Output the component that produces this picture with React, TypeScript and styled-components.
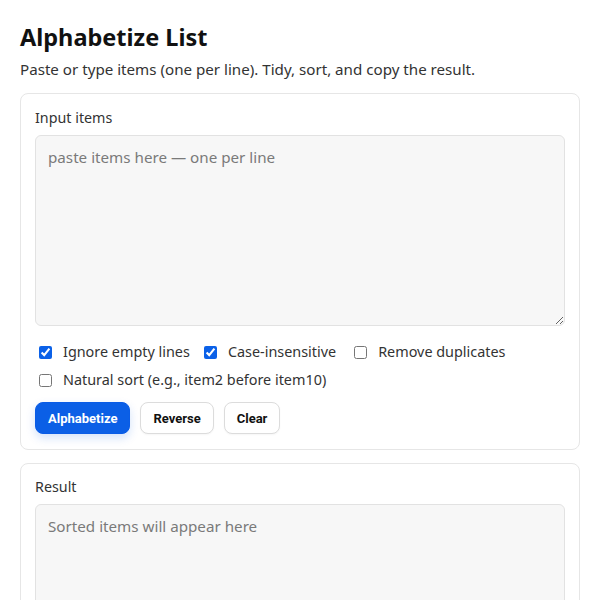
import React from "react";
import styled, { createGlobalStyle } from "styled-components";

const Global = createGlobalStyle`
  html, body { margin: 0; padding: 0; background: #ffffff; }
  body { font-family: "Noto Sans", "Open Sans", sans-serif; color: #1a1a1a; }
  * { box-sizing: border-box; }
`;

const Page = styled.main`
  padding: 20px 20px 20px 20px;
  display: flex;
  flex-direction: column;
`;

const Title = styled.h1`
  margin: 0;
  font-size: 23.5px;
  font-weight: 700;
  line-height: 34px;
  color: #111;
`;

const Subtitle = styled.p`
  margin: 4px 0 13px;
  font-size: 15.15px;
  line-height: 22px;
  color: #333;
`;

const Card = styled.section`
  border: 1px solid #e6e6e6;
  border-radius: 8px;
  padding: 13px 14px 15px;
  display: flex;
  flex-direction: column;
  margin-bottom: 13px;
  background: #fff;
`;

const Label = styled.label`
  font-size: 14.3px;
  line-height: 22px;
  color: #333;
  margin-bottom: 6px;
`;

const ResultLabel = styled(Label)`
  margin-top: -1px;
`;

const Area = styled.textarea<{ $h: number }>`
  width: 100%;
  height: ${(p) => p.$h}px;
  resize: vertical;
  background: #f7f7f7;
  border: 1px solid #e2e2e2;
  border-radius: 6px;
  padding: 10px 12px;
  font-family: "Noto Sans", "Open Sans", sans-serif;
  font-size: 15.2px;
  line-height: 22px;
  color: #222;
  outline: none;
  &::placeholder { color: #7a7a7a; }
`;

const Options = styled.div`
  display: flex;
  flex-wrap: wrap;
  column-gap: 10px;
  row-gap: 6px;
  margin-top: 15px;
`;

const Option = styled.label<{ $spaced?: boolean }>`
  display: flex;
  align-items: center;
  gap: 11px;
  margin-left: ${(p) => (p.$spaced ? "4px" : "0")};
  font-size: 14.4px;
  line-height: 22px;
  color: #333;
`;

const Check = styled.input`
  margin: 0 0 0 4px;
  width: 13px;
  height: 13px;
  accent-color: #0b61e8;
`;

const Buttons = styled.div`
  display: flex;
  gap: 10px;
  margin-top: 11px;
`;

const Button = styled.button<{ $primary?: boolean }>`
  height: 32px;
  padding: 0 12px;
  border-radius: 8px;
  font-family: Roboto, "Noto Sans", sans-serif;
  font-weight: 700;
  font-size: 13px;
  cursor: pointer;
  border: 1px solid ${(p) => (p.$primary ? "#0a5ce6" : "#dcdcdc")};
  background: ${(p) => (p.$primary ? "#0b5fe6" : "#ffffff")};
  color: ${(p) => (p.$primary ? "#ffffff" : "#111")};
  box-shadow: ${(p) =>
    p.$primary ? "0 4px 10px rgba(11, 95, 230, 0.18)" : "0 1px 2px rgba(0,0,0,0.04)"};
`;

export default function App() {
  return (
    <>
      <Global />
      <Page>
        <Title>Alphabetize List</Title>
        <Subtitle>Paste or type items (one per line). Tidy, sort, and copy the result.</Subtitle>
        <Card>
          <Label htmlFor="in">Input items</Label>
          <Area id="in" $h={191} placeholder="paste items here — one per line" />
          <Options>
            <Option><Check type="checkbox" defaultChecked />Ignore empty lines</Option>
            <Option><Check type="checkbox" defaultChecked />Case-insensitive</Option>
            <Option $spaced><Check type="checkbox" />Remove duplicates</Option>
            <Option><Check type="checkbox" />Natural sort (e.g., item2 before item10)</Option>
          </Options>
          <Buttons>
            <Button $primary>Alphabetize</Button>
            <Button>Reverse</Button>
            <Button>Clear</Button>
          </Buttons>
        </Card>
        <Card>
          <ResultLabel htmlFor="out">Result</ResultLabel>
          <Area id="out" $h={191} readOnly placeholder="Sorted items will appear here" />
        </Card>
      </Page>
    </>
  );
}
